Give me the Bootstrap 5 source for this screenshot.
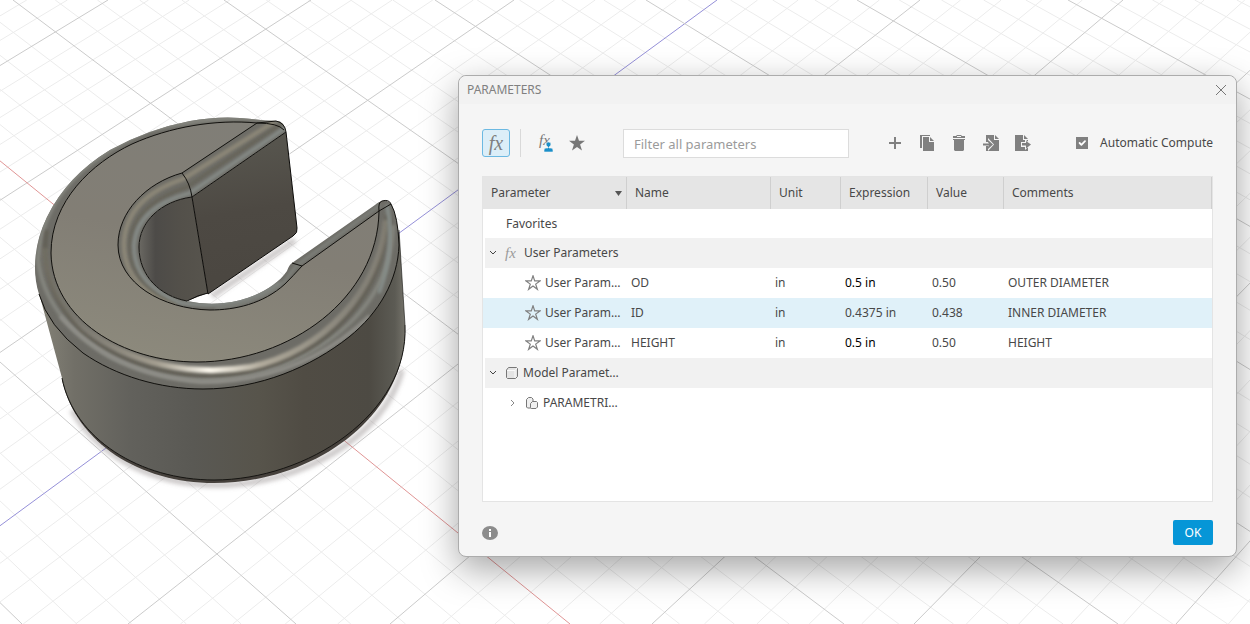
<!DOCTYPE html>
<html lang="en">
<head>
<meta charset="utf-8">
<meta name="viewport" content="width=device-width, initial-scale=1">
<title>Parameters</title>
<link href="https://cdn.jsdelivr.net/npm/bootstrap@5.3.0/dist/css/bootstrap.min.css" rel="stylesheet">
<style>
  body { font-family: "Noto Sans", sans-serif; font-size: 12px; line-height: 20px; color: #484848; background: #fff; }
  .stage { min-height: 100vh; padding: 75px 13px 64px; }
  .params { flex: 0 1 779px; background: #f5f5f5; border: 1px solid #acacac; border-radius: 8px; box-shadow: 0 12px 36px rgba(0,0,0,.36); }
  .params-head { height: 28px; padding: 0 8px; background: #f2f2f2; border-radius: 8px 8px 0 0; }
  .params-head h1 { font-size: 12px; line-height: 30px; color: #808080; font-weight: 400; }
  .params-main { padding: 25px 23px 11px; }
  .tool { width: 24px; height: 28px; padding: 0; border: 0; border-radius: 3px; background: none; color: #808080; display: flex; align-items: center; justify-content: center; }
  .tool-close { width: 14px; }
  .tool-on { width: 28px; background: #dceef8; border: 1px solid #6cb9e2; }
  .fx { font-family: "Liberation Serif", serif; font-style: italic; font-size: 20px; line-height: 20px; color: #808080; }
  .fx-row { font-size: 15px; width: 19px; color: #9a9a9a; }
  .tool-line { width: 1px; height: 28px; background: #d9d9d9; margin: 0 12px 0 10px; }
  .filter { flex: 0 1 226px; min-width: 100px; height: 29px; margin-left: 34px; padding: 0 10px; font-size: 13px; border: 1px solid #dcdcdc; border-radius: 0; }
  .filter::placeholder { color: #9b9b9b; }
  .auto { height: 28px; margin-left: 41px; }
  .auto .form-check-input { width: 12px; height: 12px; margin: 0; border: 0; border-radius: 0; background-color: #808080; background-size: 12px; }
  .grid-box { min-height: 326px; margin-top: 18px; background: #fff; border: 1px solid #e4e4e4; }
  .grid-box table { table-layout: fixed; border-collapse: separate; border-spacing: 0; }
  .grid-box th, .grid-box td { padding: 0 0 0 4px; white-space: nowrap; overflow: hidden; font-weight: 400; vertical-align: middle; }
  .grid-box thead th { height: 32px; background: #e5e5e5; border-right: 1px solid #cfcfcf; padding: 0 4px 0 8px; }
  .grid-box tbody tr { height: 30px; }
  .grid-box tbody tr.favorites { height: 29px; }
  .group td { background: #f1f1f1; box-shadow: inset 2px 0 #fff; }
  .grid-box .group td, .grid-box .favorites td { padding-left: 6px; }
  .chosen td { background: #e0f1f9; }
  .tree { display: flex; align-items: center; }
  .lvl-fav { padding-left: 17px; }
  .lvl-item { padding-left: 38px; }
  .lvl-sub { padding-left: 20px; }
  .strong-value { color: #000; }
  .params-foot { margin-top: 18px; }
  .ok { width: 40px; height: 25px; padding: 0; font-size: 12px; line-height: 25px; border: 0; border-radius: 2px; color: #fff; background: #0696d7; }
</style>
</head>
<body>
<main class="stage position-relative overflow-hidden d-flex justify-content-end align-items-start">
  <svg class="position-absolute top-0 start-0 w-100 h-100" viewBox="0 0 1250 624" preserveAspectRatio="xMinYMin slice" role="img" aria-label="Split ring model on the ground grid">
    <defs>
      <filter id="b1"><feGaussianBlur stdDeviation="1.500"/></filter>
      <filter id="b2"><feGaussianBlur stdDeviation="2"/></filter>
      <linearGradient id="side" gradientUnits="userSpaceOnUse" x1="38" y1="0" x2="406" y2="0">
        <stop offset="0" stop-color="#858378"/><stop offset=".1" stop-color="#716f67"/><stop offset=".25" stop-color="#62615c"/><stop offset=".42" stop-color="#5a5954"/><stop offset=".6" stop-color="#57544b"/><stop offset=".72" stop-color="#504c44"/><stop offset=".9" stop-color="#4d4a43"/><stop offset=".97" stop-color="#5c5b54"/><stop offset="1" stop-color="#77756c"/>
      </linearGradient>
      <linearGradient id="face" gradientUnits="userSpaceOnUse" x1="230" y1="120" x2="180" y2="362">
        <stop offset="0" stop-color="#807e77"/><stop offset=".5" stop-color="#827e75"/><stop offset="1" stop-color="#8c897c"/>
      </linearGradient>
      <linearGradient id="wall" gradientUnits="userSpaceOnUse" x1="240" y1="150" x2="260" y2="270">
        <stop offset="0" stop-color="#56544d"/><stop offset=".5" stop-color="#4d4943"/><stop offset="1" stop-color="#4b4741"/>
      </linearGradient>
      <linearGradient id="bore" gradientUnits="userSpaceOnUse" x1="138" y1="0" x2="207" y2="0">
        <stop offset="0" stop-color="#6c6a64"/><stop offset=".25" stop-color="#4d4b48"/><stop offset=".6" stop-color="#53504a"/><stop offset="1" stop-color="#57544d"/>
      </linearGradient>
      <linearGradient id="shine" gradientUnits="userSpaceOnUse" x1="70" y1="0" x2="360" y2="0">
        <stop offset="0" stop-color="#a39d8e" stop-opacity=".2"/><stop offset=".3" stop-color="#b3ac9c" stop-opacity=".8"/><stop offset=".48" stop-color="#fffbf0"/><stop offset=".66" stop-color="#b9b2a2" stop-opacity=".9"/><stop offset="1" stop-color="#a7a192" stop-opacity=".4"/>
      </linearGradient>
      <path id="rim" d="M286 132 Q284 121 277 121 Q264 121 252 119 Q222 115 190 121 Q148 129 110 150 Q67 176 47 217 Q35 242 35 267 Q35 282 39 294 Q48 326 83 353 C116 376 160 389 203 389 C260 389 311 367 349 337 C379 313 398 280 399 245 Q398 216 391 204 Q387 199 382 201 Q378 202 375 205 L292 263 Q289 265 287 271 C275 289 247 301 224 303 Q205 305 187 301 C160 296 139 276 139 247 C139 222 161 201 192 197 L285 133Z"/>
      <clipPath id="rimClip"><use href="#rim"/></clipPath>
      <path id="top" d="M257 123 C215 119 170 127 132 144 C92 163 51 201 51 253 C52 319 123 362 197 362 C290 362 378 298 379 211 L302 266 Q293 276 285 284 C263 304 235 310 210 310 C162 309 118 283 118 245 C118 212 146 183 182 173Z"/>
    </defs>
    <g id="ground" fill="none" stroke-width="1"></g>
    <path d="M72 410 C100 458 155 485 218 485 C300 485 384 437 402 370 M212 296 L295 240" fill="none" stroke="#807878" stroke-opacity=".4" stroke-width="6" filter="url(#b2)"/>
    <path d="M62 380 C76 443 140 483 214 483 C307 483 400 424 405 335Z" fill="#46413c"/>
    <path d="M35 267 Q36 284 43 308 L62 378 C74 439 140 480 214 480 C307 480 409 414 405 325 L399 230 L385 290 Q320 360 203 370 Q90 350 35 267Z" fill="url(#side)"/>
    <path d="M62 378 C74 439 140 480 214 480 C307 480 409 414 405 325" fill="none" stroke="#161512"/>
    <path d="M192 197 L286 132 L297 228 Q297 234 293 236 L208 294Z" fill="url(#wall)"/>
    <path d="M192 197 C161 201 139 222 139 247 C139 276 160 296 187 301 L208 293Z" fill="url(#bore)"/>
    <path d="M187 301 Q198 295 208 293 M192 197 L208 294 L293 236 Q298 233 297 228 L286 132" fill="none" stroke="#0c0b09"/>
    <use href="#rim" fill="#6d6c66"/>
    <g clip-path="url(#rimClip)" fill="none">
      <path d="M283 121 Q225 112 150 130 Q42 175 38 260 Q45 318 110 357 Q190 397 280 367 Q391 319 393 225" stroke="#85867f" stroke-width="4" filter="url(#b1)"/>
      <path d="M47 230 Q37 285 82 332 C130 372 198 382 250 371 C330 353 385 295 387 215" stroke="#625f55" stroke-width="4" filter="url(#b1)"/>
      <path d="M45 248 Q44 287 82 326 C130 366 195 376 250 367 C323 352 380 290 386 220" stroke="url(#shine)" stroke-width="6" filter="url(#b1)"/>
      <path d="M60 316 Q112 374 201 382 Q300 382 370 316" stroke="#8f8e88" stroke-width="4" filter="url(#b1)"/>
      <path d="M274 122 L183 179 Q126 198 124 243 Q123 288 177 304" stroke="#8b8677" stroke-width="5" filter="url(#b1)"/>
      <path d="M281 124 L187 187 Q132 205 130 245 Q130 286 177 303" stroke="#666459" stroke-width="3" filter="url(#b1)"/>
      <path d="M285 128 L190 193 Q137 207 134 245 Q133 284 181 303 Q240 311 280 283" stroke="#858a86" stroke-width="4" filter="url(#b1)"/>
      <path d="M380 205 L296 266 L285 281 Q255 305 215 308" stroke="#7e807a" stroke-width="3" filter="url(#b1)"/>
      <path d="M387 205 Q396 247 379 293" stroke="#858c88" stroke-width="4" filter="url(#b1)"/>
    </g>
    <use href="#top" fill="url(#face)" stroke="#11100d"/>
    <g fill="none" stroke="#11100d">
      <path d="M257 123 L276 121 Q285 123 286 132 M257 123 Q278 123 284 130 M286 132 L192 197 C161 201 139 222 139 247 C139 276 160 296 187 301 M182 173 Q190 183 192 197"/>
      <path d="M39 294 Q48 326 83 353 C116 376 160 389 203 389 C260 389 311 367 349 337 C379 313 398 280 399 245 Q398 216 391 204 L379 211 Q378 202 382 201 Q389 199 391 204 M302 266 L292 263"/>
      <path d="M399 230 L405 325" stroke-opacity=".6"/>
    </g>
  </svg>

  <section class="params position-relative" aria-labelledby="params-title">
    <header class="params-head d-flex justify-content-between align-items-center">
      <h1 id="params-title" class="m-0">PARAMETERS</h1>
      <button type="button" class="tool tool-close" aria-label="Close"><svg width="12" height="12" viewBox="0 0 12 12" fill="none" stroke="#777"><path d="M1 1l10 10M11 1L1 11"/></svg></button>
    </header>
    <div class="params-main">
      <div class="d-flex align-items-start">
        <button type="button" class="tool tool-on" aria-label="All parameters"><span class="fx">fx</span></button>
        <span class="tool-line"></span>
        <button type="button" class="tool" aria-label="User parameters"><svg width="24" height="24" viewBox="0 0 24 24"><text x="6" y="14" font-family="Liberation Serif, serif" font-style="italic" font-size="15" fill="#777">fx</text><path d="M11 21v-2q0-2 2-2h2v-1q-2-1-2-3 0-2 2.500-2t2.500 2q0 2-2 3v1h2q2 0 2 2v2z" fill="#1b8fc9" stroke="#f5f5f5" stroke-width=".6"/></svg></button>
        <button type="button" class="tool ms-2" aria-label="Favorites"><svg width="16" height="16" viewBox="0 0 16 16" fill="#777"><path d="M8 0l2 5.800h6l-4.900 3.600L13 15.500 8 11.900 3 15.500l1.900-6.100L0 5.800h6z"/></svg></button>
        <input class="form-control filter" type="text" placeholder="Filter all parameters" aria-label="Filter all parameters">
        <div class="d-flex gap-2 ms-auto">
          <button type="button" class="tool" aria-label="Add"><svg width="12" height="12" viewBox="0 0 12 12" fill="#808080"><path d="M5 0h2v5h5v2H7v5H5V7H0V5h5z"/></svg></button>
          <button type="button" class="tool" aria-label="Copy"><svg width="16" height="16" viewBox="0 0 16 16" fill="#808080"><path d="M1 0h10v1H3v12H1zM4 2h6v5h5v9H4zM11 2l4 4h-4z"/></svg></button>
          <button type="button" class="tool" aria-label="Delete"><svg width="14" height="16" viewBox="0 0 14 16" fill="#808080"><path d="M1 1h3l1-1h4l1 1h3v2H1zM5 1v1h4V1zM1 4h12v1h-1v10l-1 1H3l-1-1V5H1z" fill-rule="evenodd"/></svg></button>
          <button type="button" class="tool" aria-label="Import"><svg width="16" height="16" viewBox="0 0 16 16"><path d="M3 0h8v5h5v11H3zM12 0l4 4h-4z" fill="#808080"/><path d="M0 7h5V3l6 6.500L5 16v-5H0z" fill="#f5f5f5"/><path d="M0 8.500h6L4 6l1-1 5 4.500L5 14l-1-1 2-2.500H0z" fill="#808080"/></svg></button>
          <button type="button" class="tool" aria-label="Export"><svg width="16" height="16" viewBox="0 0 16 16"><path d="M0 0h8v5h5v11H0zM9 0l4 4H9z" fill="#808080"/><path d="M6 7h4V4l6 5.500-6 5.500v-3H6z" fill="#f5f5f5"/><path d="M7 8h4V6l5 3.500-5 4v-3H7z" fill="#808080"/></svg></button>
        </div>
        <div class="auto d-flex align-items-center gap-2">
          <input class="form-check-input" type="checkbox" id="auto" checked>
          <label class="ms-1" for="auto">Automatic Compute</label>
        </div>
      </div>

      <div class="grid-box">
        <table class="w-100">
          <colgroup><col style="width:144px"><col style="width:144px"><col style="width:70px"><col style="width:87px"><col style="width:76px"><col></colgroup>
          <thead>
            <tr>
              <th><span class="d-flex justify-content-between align-items-center">Parameter <svg width="7" height="5" viewBox="0 0 7 5" fill="#555"><path d="M0 0h7L3.500 5z"/></svg></span></th>
              <th>Name</th><th>Unit</th><th>Expression</th><th>Value</th><th>Comments</th>
            </tr>
          </thead>
          <tbody>
            <tr class="favorites"><td colspan="6"><span class="tree lvl-fav">Favorites</span></td></tr>
            <tr class="group"><td colspan="6"><span class="tree"><svg class="me-2" width="8" height="6" viewBox="0 0 8 6" fill="none" stroke="#444"><path d="M1 1l3 3 3-3"/></svg><span class="fx fx-row">fx</span>User Parameters</span></td></tr>
            <tr><td><span class="tree lvl-item"><svg class="me-1" width="16" height="16"><use href="#star"/></svg>User Param…</span></td><td>OD</td><td>in</td><td class="strong-value">0.5 in</td><td>0.50</td><td>OUTER DIAMETER</td></tr>
            <tr class="chosen"><td><span class="tree lvl-item"><svg class="me-1" width="16" height="16"><use href="#star"/></svg>User Param…</span></td><td>ID</td><td>in</td><td>0.4375 in</td><td>0.438</td><td>INNER DIAMETER</td></tr>
            <tr><td><span class="tree lvl-item"><svg class="me-1" width="16" height="16"><use href="#star"/></svg>User Param…</span></td><td>HEIGHT</td><td>in</td><td class="strong-value">0.5 in</td><td>0.50</td><td>HEIGHT</td></tr>
            <tr class="group"><td colspan="6"><span class="tree"><svg class="me-2" width="8" height="6" viewBox="0 0 8 6" fill="none" stroke="#444"><path d="M1 1l3 3 3-3"/></svg><svg width="14" height="14" viewBox="0 0 14 14" class="me-1"><path d="M1.500 4l2-2.500h8l1 1v8l-2 2H2.500l-1-1z" fill="#e4e4e4"/><path d="M2 4.500h8v8M10 4.500l2.500-3" fill="none" stroke="#fafafa"/><path d="M1.500 4l2-2.500h8l1 1v8l-2 2H2.500l-1-1z" fill="none" stroke="#777"/></svg>Model Paramet…</span></td></tr>
            <tr><td colspan="6"><span class="tree lvl-sub"><svg class="me-2" width="10" height="8" viewBox="0 0 10 8" fill="none" stroke="#888"><path d="M4 1l3 3-3 3"/></svg><svg width="14" height="14" viewBox="0 0 14 14" class="me-1" fill="#efefef" stroke="#777"><path d="M1.500 3.500l2-2h3l1.500 1.500v9H2.500l-1-1z"/><path d="M5.500 7.500l2-2h4l1 1v4.500l-1.500 1.500h-4.500l-1-1z"/></svg>PARAMETRI…</span></td></tr>
          </tbody>
        </table>
      </div>
      <footer class="params-foot d-flex justify-content-between align-items-center">
        <svg width="16" height="14" viewBox="0 0 16 14" role="img" aria-label="Information"><ellipse cx="8" cy="7" rx="8" ry="7" fill="#8c8c8c"/><path d="M7 3h2v2H7zM7 6h2v5H7z" fill="#fff"/></svg>
        <button type="button" class="ok">OK</button>
      </footer>
    </div>
  </section>
  <svg width="0" height="0" class="position-absolute" aria-hidden="true"><symbol id="star" viewBox="0 0 16 16"><path d="M8 .800l1.700 5.100h5.300l-4.300 3.200 1.700 5.200L8 11.100 3.600 14.300l1.700-5.200L1 5.900h5.300z" fill="none" stroke="#808080" stroke-width="1.200"/></symbol></svg>
</main>
<script src="https://cdn.jsdelivr.net/npm/bootstrap@5.3.0/dist/js/bootstrap.bundle.min.js"></script>
<script>
  // Ground grid: each line runs between its crossing of the top and of the bottom edge.
  const ground = document.getElementById('ground');
  const families = [
    { top: 717, topStep: 203, bottom: -134, bottomStep: 262, from: -4, to: 7, axis: '#9590d8' },
    { top: -198, topStep: 211, bottom: 570, bottomStep: 274, from: -3, to: 7, axis: '#e09595' }
  ];
  const draw = (f, n, colour) => {
    const line = document.createElementNS('http://www.w3.org/2000/svg', 'path');
    line.setAttribute('d', `M${f.top + f.topStep * n} 0L${f.bottom + f.bottomStep * n} 624`);
    line.setAttribute('stroke', colour);
    ground.append(line);
  };
  families.forEach(f => { for (let i = f.from * 5; i <= f.to * 5; i++) if (i % 5) draw(f, i / 5, '#ececec'); });
  families.forEach(f => { for (let i = f.from; i <= f.to; i++) draw(f, i, i ? '#cbcbcb' : f.axis); });
</script>
</body>
</html>
